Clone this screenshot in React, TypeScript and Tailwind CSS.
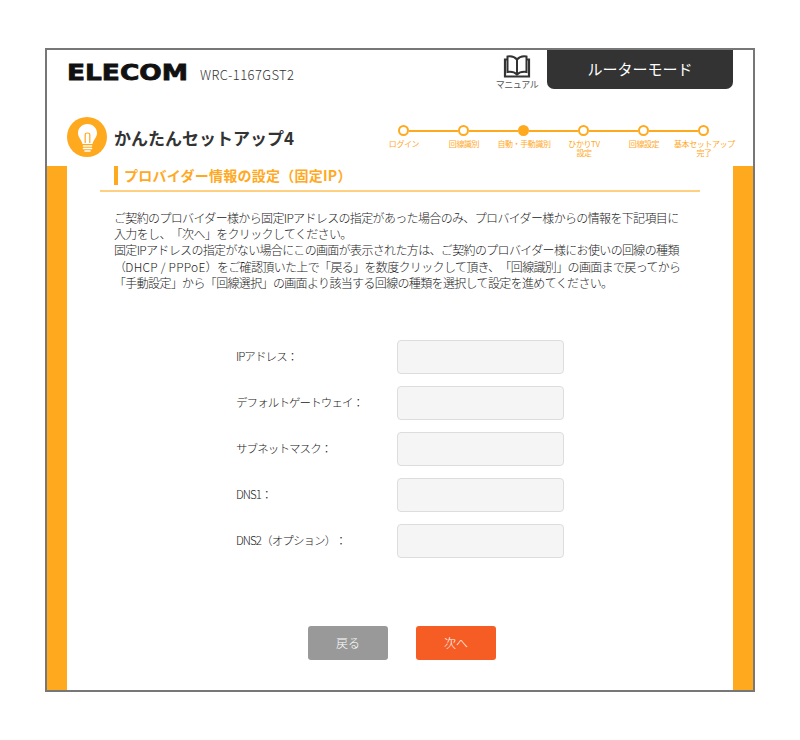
const jp = { fontFamily: '"Noto Sans CJK JP", sans-serif' };

const steps: { label: string[]; active?: boolean }[] = [
  { label: ["ログイン"] },
  { label: ["回線識別"] },
  { label: ["自動・手動識別"], active: true },
  { label: ["ひかりTV", "設定"] },
  { label: ["回線設定"] },
  { label: ["基本セットアップ", "完了"] },
];

const fields = ["IPアドレス：", "デフォルトゲートウェイ：", "サブネットマスク：", "DNS1：", "DNS2（オプション）："];

function BookIcon() {
  return (
    <svg width="28" height="23" viewBox="0 0 28 23" fill="none" stroke="#333" strokeWidth="2">
      <path d="M14 4.5C11.5 1.5 7.5 1 4.5 1.5V17C8 16.5 11.5 17 14 19.5C16.5 17 20 16.5 23.5 17V1.5C20.5 1 16.5 1.5 14 4.5Z" />
      <path d="M14 4.5V19.5" />
      <path d="M4.5 4.5H2V21.5H26V4.5H23.5" strokeWidth="2.2" />
    </svg>
  );
}

function BulbIcon() {
  return (
    <svg width="40" height="40" viewBox="0 0 40 40" fill="none">
      <circle cx="20" cy="20" r="20" fill="#ffa91f" />
      <path d="M20.5 7C15 7 11 11 11 16C11 20.5 14.5 22.5 15.5 27H25.5C26.5 22.5 30 20.5 30 16C30 11 26 7 20.5 7Z" fill="#fff" />
      <path d="M18.2 26V17.5C18.2 16.5 19 16 20.5 16C22 16 22.8 16.5 22.8 17.5V26" stroke="#ffa91f" strokeWidth="1.2" />
      <path d="M16.5 29H24.5M16.5 31.5H24.5M18 34H23" stroke="#fff" strokeWidth="1.6" strokeLinecap="round" />
    </svg>
  );
}

function Stepper() {
  return (
    <div className="flex flex-col mt-[8px]">
      <div className="flex items-center pl-[24px]">
        {steps.map((s, i) => (
          <div key={i} className="flex items-center">
            <div className={`w-[11px] h-[11px] rounded-full border-2 border-[#ffa91f] shrink-0 ${s.active ? "bg-[#ffa91f]" : "bg-white"}`} />
            {i < steps.length - 1 && <div className="w-[49px] h-[2px] bg-[#ffa91f]" />}
          </div>
        ))}
      </div>
      <div className="flex mt-[3px]">
        {steps.map((s, i) => (
          <div key={i} className="w-[60px] text-center text-[8px] leading-[9px] tracking-[-0.4px] text-[#ffa91f] whitespace-nowrap">
            {s.label[0]}
            {s.label[1] && (
              <>
                <br />
                {s.label[1]}
              </>
            )}
          </div>
        ))}
      </div>
    </div>
  );
}

export default function App() {
  return (
    <div className="w-[800px] h-[740px] bg-white pt-[48px] pl-[45px]" style={jp}>
      <div className="w-[710px] h-[644px] border-2 border-[#777] flex flex-col">
        <header className="h-[116px] shrink-0 flex flex-col">
          <div className="h-[39px] flex pl-[20px]">
            <div className="flex items-start pt-[10px]">
              <span
                className="text-[#111] font-bold text-[22px] leading-[26px] w-[120px] whitespace-nowrap [-webkit-text-stroke:0.8px_#111]"
                style={{ fontFamily: '"DejaVu Sans", sans-serif' }}
              >
                <span className="inline-block origin-left scale-x-[1.2]">ELECOM</span>
              </span>
              <span className="ml-[13px] mt-[6px] text-[13px] leading-[18px] tracking-[0.4px] font-light text-[#333]">WRC-1167GST2</span>
            </div>
            <div className="ml-auto flex items-start">
              <div className="w-[40px] mr-[10px] flex flex-col items-center pt-[5px]">
                <BookIcon />
                <span className="text-[9px] leading-[12px] mt-[1px] tracking-[-0.4px] text-[#555] whitespace-nowrap">マニュアル</span>
              </div>
              <div className="w-[186px] h-[39px] bg-[#333] rounded-b-[7px] flex items-center justify-center text-white text-[15px] mr-[20px]">
                ルーターモード
              </div>
            </div>
          </div>
          <div className="flex pl-[20px] pt-[28px]">
            <BulbIcon />
            <h1 className="ml-[7px] mt-[7px] text-[17px] leading-[28px] font-bold text-[#333] whitespace-nowrap">かんたんセットアップ4</h1>
            <div className="ml-auto mr-[19px]">
              <Stepper />
            </div>
          </div>
        </header>
        <div className="flex-1 flex">
          <div className="w-[20px] bg-[#ffa91f]" />
          <main className="flex-1 flex flex-col pl-[33px] pr-[33px]">
            <div className="border-b-2 border-[#ffd080] h-[26px]">
              <div className="ml-[14px] h-[19px] border-l-[4px] border-[#ffa91f] pl-[6px] text-[14px] leading-[19px] tracking-[0.25px] font-bold text-[#ffa91f] [text-spacing-trim:space-all]">
                プロバイダー情報の設定（固定IP）
              </div>
            </div>
            <p className="ml-[14px] mt-[18px] text-[12px] leading-[16.2px] tracking-[-0.65px] font-light text-[#222] whitespace-nowrap [text-spacing-trim:space-all]">
              ご契約のプロバイダー様から固定IPアドレスの指定があった場合のみ、プロバイダー様からの情報を下記項目に
              <br />
              入力をし、「次へ」をクリックしてください。
              <br />
              固定IPアドレスの指定がない場合にこの画面が表示された方は、ご契約のプロバイダー様にお使いの回線の種類
              <br />
              （<span className="tracking-[0.25px]">DHCP / PPPoE</span>）をご確認頂いた上で「戻る」を数度クリックして頂き、「回線識別」の画面まで戻ってから
              <br />
              「手動設定」から「回線選択」の画面より該当する回線の種類を選択して設定を進めてください。
            </p>
            <div className="mt-[49px] flex flex-col gap-[12px] ml-[136px]">
              {fields.map((f) => (
                <div key={f} className="flex items-center">
                  <label className="w-[161px] -mt-[1px] text-[11.5px] font-light text-[#222] whitespace-nowrap tracking-[-0.9px] [text-spacing-trim:space-all]">{f}</label>
                  <div className="w-[167px] h-[34px] rounded-[4px] border border-[#ddd] bg-[#f5f5f5]" />
                </div>
              ))}
            </div>
            <div className="mt-[68px] flex gap-[28px] ml-[208px]">
              <button className="w-[80px] h-[34px] rounded-[3px] bg-[#999] text-white text-[12px] font-light">戻る</button>
              <button className="w-[80px] h-[34px] rounded-[3px] bg-[#f55d25] text-white text-[12px] font-light">次へ</button>
            </div>
          </main>
          <div className="w-[20px] bg-[#ffa91f]" />
        </div>
      </div>
    </div>
  );
}
